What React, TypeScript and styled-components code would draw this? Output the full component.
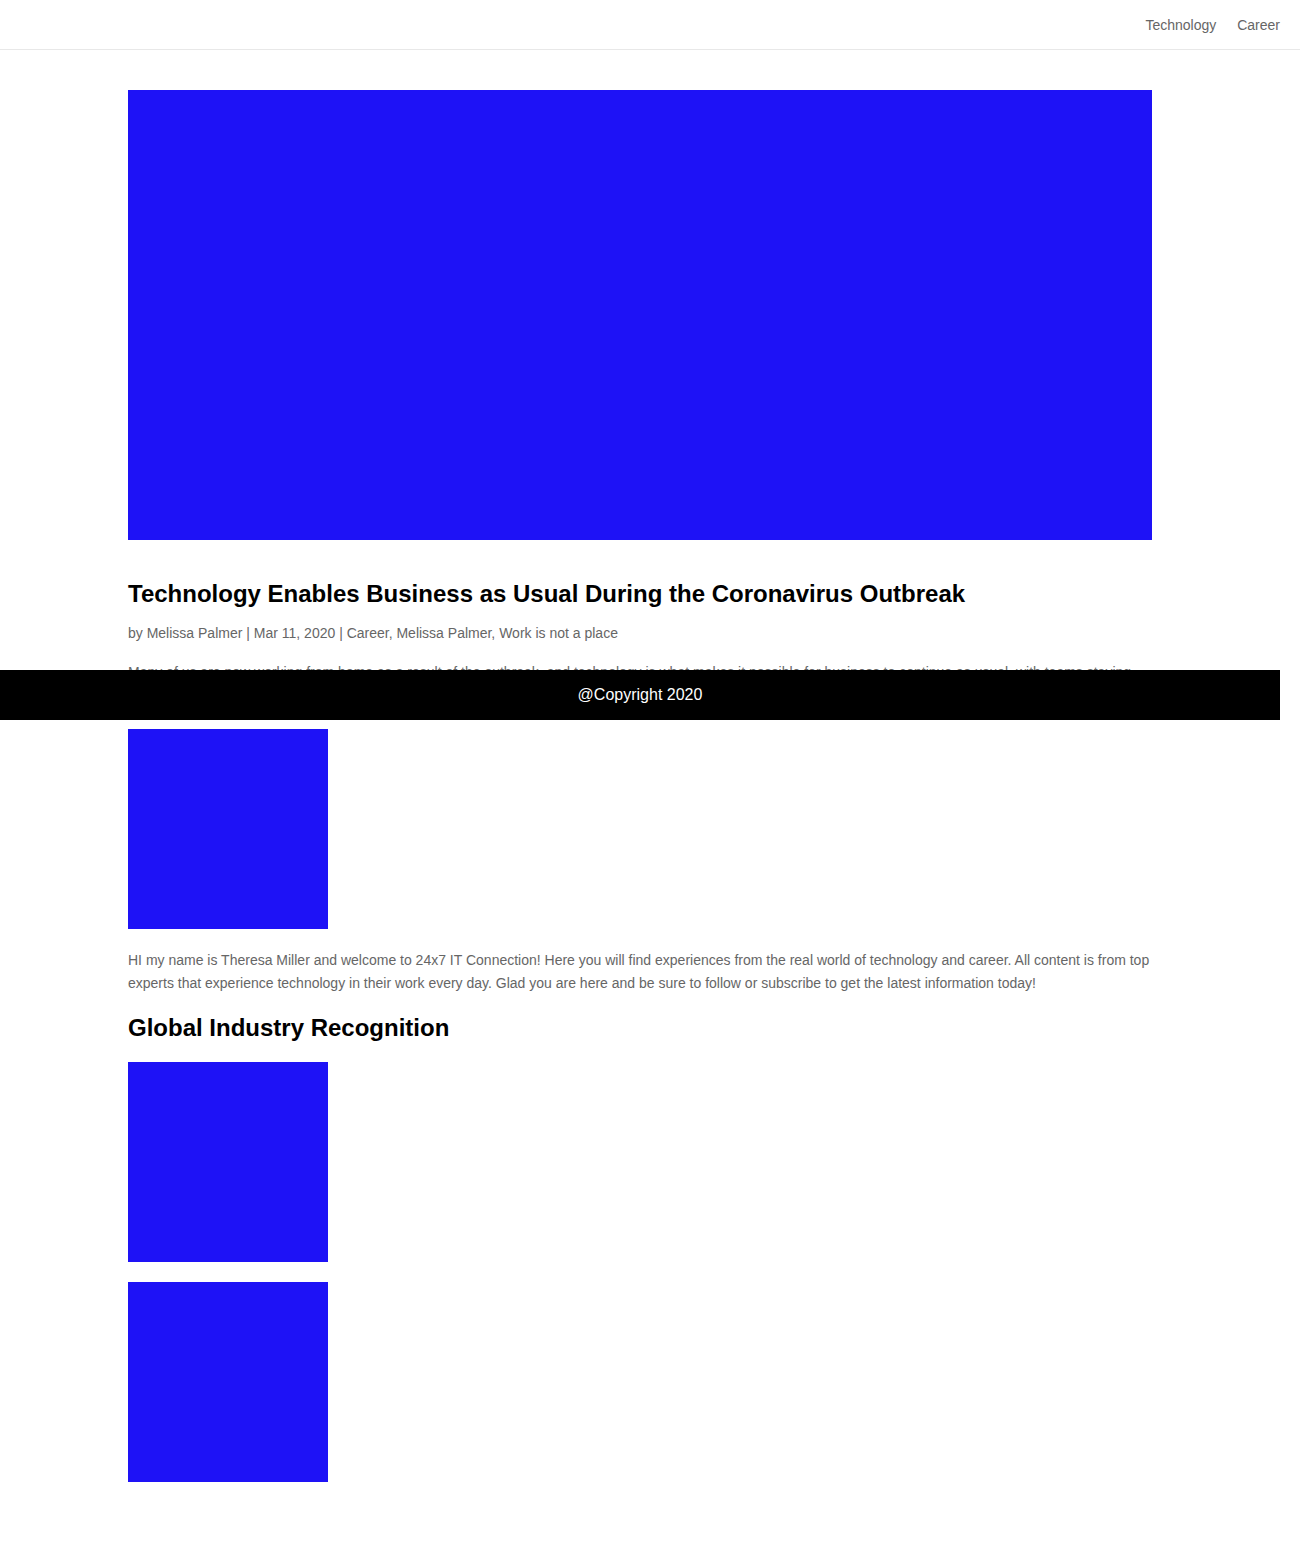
import React from "react";
import styled, { createGlobalStyle } from "styled-components";

const Global = createGlobalStyle`
  html, body { margin: 0; padding: 0; background: #fff; }
  body { font-family: "Liberation Sans", Arial, sans-serif; }
`;

const Header = styled.header`
  height: 50px;
  border-bottom: 1px solid #e8e8e8;
  box-sizing: border-box;
  display: flex;
  justify-content: flex-end;
  align-items: center;
  padding-right: 20px;
`;

const Nav = styled.nav`
  display: flex;
  gap: 21px;
`;

const NavLink = styled.a`
  font-size: 14px;
  color: #666;
  text-decoration: none;
`;

const Page = styled.div`
  width: 1280px;
`;

const Main = styled.main`
  width: 1024px;
  margin: 0 auto;
  padding: 40px 0 60px;
`;

const Block = styled.div<{ $w: number; $h: number; $mb?: number }>`
  width: ${(p) => p.$w}px;
  height: ${(p) => p.$h}px;
  background: #1e12f6;
  margin-bottom: ${(p) => p.$mb ?? 0}px;
`;

const Title = styled.h1`
  font-size: 24px;
  font-weight: 700;
  color: #000;
  margin: 40px 0 0;
  line-height: 28px;
`;

const Meta = styled.p`
  font-size: 14px;
  color: #666;
  margin: 15px 0 0;
  line-height: 20px;
`;

const Text = styled.p<{ $mt: number; $mb: number }>`
  font-size: 14px;
  color: #666;
  line-height: 23px;
  margin: ${(p) => p.$mt}px 0 ${(p) => p.$mb}px;
`;

const SectionTitle = styled.h2`
  font-size: 24px;
  font-weight: 700;
  color: #000;
  margin: 0 0 20px;
  line-height: 28px;
`;

const Footer = styled.footer`
  position: fixed;
  top: 670px;
  left: 0;
  width: 1280px;
  height: 50px;
  background: #000;
  color: #fff;
  display: flex;
  align-items: center;
  justify-content: center;
  font-size: 16px;
`;

export default function App() {
  return (
    <>
      <Global />
      <Header>
        <Nav>
          <NavLink href="#">Technology</NavLink>
          <NavLink href="#">Career</NavLink>
        </Nav>
      </Header>
      <Page>
        <Main>
          <Block $w={1024} $h={450} />
          <Title>Technology Enables Business as Usual During the Coronavirus Outbreak</Title>
          <Meta>by Melissa Palmer | Mar 11, 2020 | Career, Melissa Palmer, Work is not a place</Meta>
          <Text $mt={18} $mb={22}>
            Many of us are now working from home as a result of the outbreak, and technology is what makes it possible for business to continue as usual, with teams staying
            connected and productive wherever they are.
          </Text>
          <Block $w={200} $h={200} />
          <Text $mt={20} $mb={19}>
            HI my name is Theresa Miller and welcome to 24x7 IT Connection! Here you will find experiences from the real world of technology and career. All content is from top
            experts that experience technology in their work every day. Glad you are here and be sure to follow or subscribe to get the latest information today!
          </Text>
          <SectionTitle>Global Industry Recognition</SectionTitle>
          <Block $w={200} $h={200} $mb={20} />
          <Block $w={200} $h={200} />
        </Main>
      </Page>
      <Footer>@Copyright 2020</Footer>
    </>
  );
}
